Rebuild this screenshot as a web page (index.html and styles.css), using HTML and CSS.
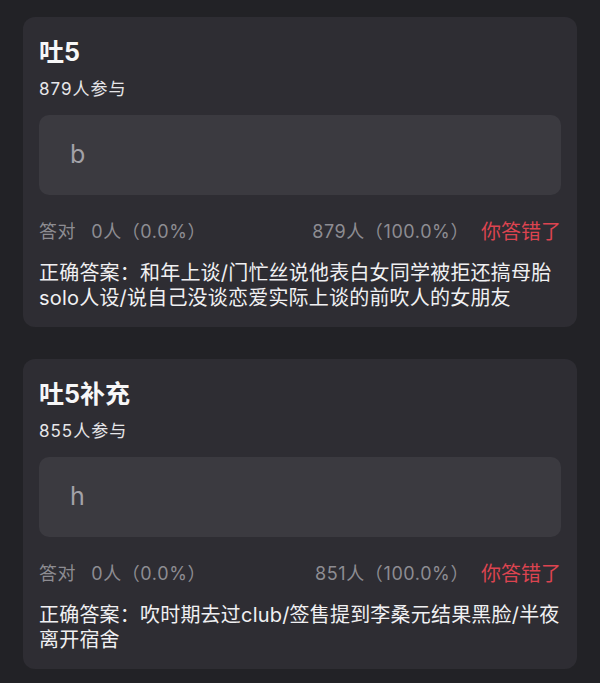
FILE: index.html
```html
<!DOCTYPE html>
<html lang="zh-CN">
<head>
	<meta charset="UTF-8">
	<title>答题结果</title>
<link rel="stylesheet" href="styles.css">
</head>
<body>
	<div class='quiz-list'>
		<div class='quiz-card'>
			<div class='quiz-title'>吐5</div>
			<div class='quiz-count'>879人参与</div>
			<div class='quiz-answer'>b</div>
			<div class='quiz-stat'>
				<span class='stat-label'>答对</span>
				<span class='stat-right'>0人（0.0%）</span>
				<span class='stat-wrong'>879人（100.0%）</span>
				<span class='stat-mine'>你答错了</span>
			</div>
			<div class='quiz-key'>正确答案：和年上谈/门忙丝说他表白女同学被拒还搞母胎<br>solo人设/说自己没谈恋爱实际上谈的前吹人的女朋友</div>
		</div>
		<div class='quiz-card'>
			<div class='quiz-title'>吐5补充</div>
			<div class='quiz-count'>855人参与</div>
			<div class='quiz-answer'>h</div>
			<div class='quiz-stat'>
				<span class='stat-label'>答对</span>
				<span class='stat-right'>0人（0.0%）</span>
				<span class='stat-wrong'>851人（100.0%）</span>
				<span class='stat-mine'>你答错了</span>
			</div>
			<div class='quiz-key'>正确答案：吹时期去过club/签售提到李桑元结果黑脸/半夜<br>离开宿舍</div>
		</div>
	</div>
</body>
</html>
```

FILE: styles.css
```css
html,body{
	margin:0;
	padding:0;
	background-color:#222226;
}
body{
	font-family:Inter,"Noto Sans CJK SC",sans-serif;
	color:#f0f0f2;
}
.quiz-list{
	display:flex;
	flex-direction:column;
	gap:32px;
	padding:17px 23px 0 23px;
}
.quiz-card{
	background-color:#2e2d33;
	border-radius:12px;
	padding:19px 16px 16px 16px;
}
.quiz-title{
	font-size:25px;
	font-weight:bold;
	line-height:32px;
	color:#f7f7f8;
}
.quiz-count{
	margin-top:9px;
	font-size:17px;
	line-height:24px;
	letter-spacing:1px;
	color:#e6e6e9;
}
.quiz-answer{
	margin-top:14px;
	height:80px;
	line-height:78px;
	padding-left:31px;
	border-radius:10px;
	background-color:#3b3a40;
	color:#a3a2a8;
	font-size:25px;
}
.quiz-stat{
	display:flex;
	align-items:center;
	margin-top:24px;
	font-size:18px;
	line-height:26px;
	letter-spacing:0.6px;
	color:#8d8c92;
}
.stat-label{
	margin-right:15px;
}
.stat-right{
	flex:1;
}
.stat-mine{
	margin-left:12px;
	font-size:20px;
	letter-spacing:0;
	color:#dc4450;
}
.quiz-key{
	margin-top:16px;
	font-size:20px;
	line-height:25px;
	letter-spacing:0.2px;
	white-space:nowrap;
}
```
